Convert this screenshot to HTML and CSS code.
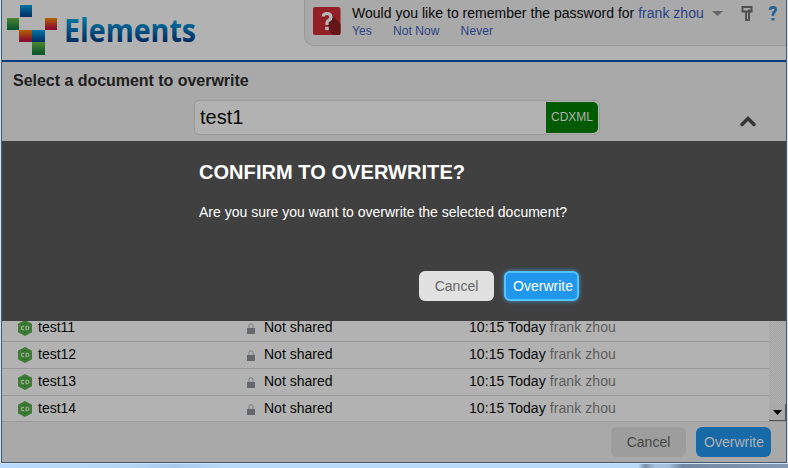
FILE: index.html
```
<!DOCTYPE html>
<html lang="en">
<head>
<meta charset="utf-8">
<title>Elements</title>
<link rel="stylesheet" href="styles.css">
</head>
<body>
<svg class="symbols" width="0" height="0" aria-hidden="true">
  <symbol id="cd" viewBox="0 0 14 16">
    <path d="M7 0l7 3.8v8.4L7 16l-7-3.8V3.8z" fill="#3e7c35"/>
    <path d="M3 5.2Q7 1.6 11 5.2M3 10.8q4 3.6 8 0" fill="none" stroke="#2c6b2c"/>
    <path d="M6 6.3H3.7v3.4H6M8 6.3h1.6q1.3 0 1.3 1.7T9.600 9.700H8z" fill="none" stroke="#a4b5a0"/>
  </symbol>
  <symbol id="lock" viewBox="0 0 8 11">
    <path d="M2 5V2.500Q2 .7 4 .7t2 1.800V5" fill="none" stroke="#777b7e"/>
    <path d="M0 5h8v6H0z" fill="#64686c"/>
  </symbol>
</svg>
<div class="window">
  <header class="header">
    <svg class="logo" width="200" height="60" viewBox="0 0 200 60">
      <defs>
        <linearGradient id="blue" x2="0" y2="1"><stop stop-color="#0074a4"/><stop offset="1" stop-color="#002c62"/></linearGradient>
        <linearGradient id="green" x2="0" y2="1"><stop stop-color="#4b8530"/><stop offset="1" stop-color="#07522e"/></linearGradient>
        <linearGradient id="red" x2="0" y2="1"><stop stop-color="#b26100"/><stop offset="1" stop-color="#850035"/></linearGradient>
        <linearGradient id="word" gradientUnits="userSpaceOnUse" x1="0" y1="17" x2="0" y2="43"><stop stop-color="#007ba8"/><stop offset="1" stop-color="#00285e"/></linearGradient>
      </defs>
      <path d="M18 5h12v12H18z" fill="url(#blue)"/>
      <path d="M30 30h13v12H30z" fill="url(#blue)"/>
      <path d="M5 18h12v12H5z" fill="url(#green)"/>
      <path d="M30 42h13v13H30z" fill="url(#green)"/>
      <path d="M43 18h12v12H43z" fill="url(#red)"/>
      <path d="M17 30h13v12H17z" fill="url(#red)"/>
      <text class="wordmark" x="62" y="42" textLength="132" lengthAdjust="spacingAndGlyphs" fill="url(#word)">Elements</text>
    </svg>
    <div class="prompt">
      <svg class="badge" width="29" height="29" viewBox="0 0 29 29">
        <rect width="27.500" height="28" rx="2" fill="#942027"/>
        <path d="M18 7l9.500 10v9q0 2-2 2H20l-6-6z" fill="#641519"/>
        <path d="M10.300 9.500Q10.300 6.500 14 6.500t4 3.500q0 2-2 3.200t-2 2.600V18" fill="none" stroke="#b8b8b8" stroke-width="3.200"/>
        <rect x="12.200" y="19.800" width="3.600" height="3.300" fill="#b8b8b8"/>
      </svg>
      <div class="question">
        <div class="ask">Would you like to remember the password for <a>frank zhou</a></div>
        <div class="answers"><a>Yes</a><a>Not Now</a><a>Never</a></div>
      </div>
      <svg class="tools" width="72" height="20" viewBox="0 0 72 20">
        <path d="M0 5h11L5.500 10z" fill="#666"/>
        <path d="M30.500 1h9v4.500h-9zM34 5.500v8.500h3V3.500" fill="none" stroke="#505050" stroke-width="2"/>
        <path d="M58 3.700Q58.500 1.300 61 1.300t2.700 2.300q0 1.500-1.500 2.500T61 9.800" fill="none" stroke="#286497" stroke-width="2.700"/>
        <path d="M59.500 12h3v2.500h-3z" fill="#286497"/>
      </svg>
    </div>
  </header>
  <main class="page">
    <h1>Select a document to overwrite</h1>
    <div class="name-row">
      <div class="field"><span class="value">test1</span><span class="type">CDXML</span></div>
      <svg class="chevron" width="16" height="11" viewBox="0 0 16 11"><path d="M2 8.500l6-6 6 6" fill="none" stroke="#353535" stroke-width="3.500" stroke-linecap="round"/></svg>
    </div>
  </main>
  <section class="dialog">
    <h2>CONFIRM TO OVERWRITE?</h2>
    <p>Are you sure you want to overwrite the selected document?</p>
    <div class="actions"><button class="btn light">Cancel</button><button class="btn focus">Overwrite</button></div>
  </section>
  <div class="documents">
    <div class="rows">
      <div class="row"><svg class="cd"><use href="#cd"/></svg><span class="doc">test11</span><svg class="lock"><use href="#lock"/></svg><span class="shared">Not shared</span><span class="when">10:15 Today <i>frank zhou</i></span></div>
      <div class="row"><svg class="cd"><use href="#cd"/></svg><span class="doc">test12</span><svg class="lock"><use href="#lock"/></svg><span class="shared">Not shared</span><span class="when">10:15 Today <i>frank zhou</i></span></div>
      <div class="row"><svg class="cd"><use href="#cd"/></svg><span class="doc">test13</span><svg class="lock"><use href="#lock"/></svg><span class="shared">Not shared</span><span class="when">10:15 Today <i>frank zhou</i></span></div>
      <div class="row"><svg class="cd"><use href="#cd"/></svg><span class="doc">test14</span><svg class="lock"><use href="#lock"/></svg><span class="shared">Not shared</span><span class="when">10:15 Today <i>frank zhou</i></span></div>
    </div>
    <div class="scrollbar"><div class="down"><svg width="9" height="5" viewBox="0 0 9 5"><path d="M0 0h9L4.500 5z"/></svg></div></div>
  </div>
  <footer class="footer"><button class="btn dim">Cancel</button><button class="btn primary">Overwrite</button></footer>
</div>
</body>
</html>
```
FILE: styles.css
```
* { box-sizing: border-box; }
body {
  margin: 0;
  height: 468px;
  overflow: hidden;
  font: 14px/18px "Liberation Sans", Arial, sans-serif;
  color: #080808;
  background: linear-gradient(90deg, #b9dafa 0, #b6d6f5 130px, #a7c9ea 175px, #b9dbfa 225px, #b9dbfa 638px, #7890ab 645px, #a4c0df 655px, #a4c0df 668px, #7188a3 682px, #8499b3 788px);
}
.symbols { position: absolute; }
.window {
  width: 786px;
  height: 463px;
  margin-left: 1px;
  border: solid #465a70;
  border-width: 0 1px 1px;
  background: #a9a9a9;
  box-shadow: 0 0 0 1px #d0e2f2;
}
.header {
  display: flex;
  justify-content: space-between;
  align-items: flex-start;
  height: 62px;
  background: #b2b2b2;
  border-bottom: 2px solid #063b7d;
}
.logo { overflow: visible; }
.wordmark { font: 700 32px "Open Sans", sans-serif; }
.prompt {
  display: flex;
  width: 482px;
  height: 46px;
  padding: 5px 0 0 8px;
  border: solid #999;
  border-width: 0 0 1px 1px;
  border-radius: 0 0 0 10px;
  background: #a9a9a9;
}
.badge { margin-top: 2px; }
.question { width: 360px; margin-left: 10px; white-space: nowrap; }
.ask { height: 18px; line-height: 17px; letter-spacing: 0.02px; }
a { color: #2a4384; }
.answers { display: flex; gap: 21px; font-size: 12px; line-height: 16px; letter-spacing: 0.1px; }
.tools { flex: none; margin: 1px 0 0; }
.page { height: 79px; }
h1 { margin: 0; padding: 10px 0 0 11px; font-size: 16px; line-height: 18px; letter-spacing: -0.03px; color: #202020; }
.name-row {
  display: flex;
  justify-content: space-between;
  align-items: center;
  margin: 10px 30px 0 192px;
}
.field {
  display: flex;
  align-items: center;
  justify-content: space-between;
  width: 406px;
  height: 35px;
  padding: 1px 1px 1px 5px;
  border: 1px solid #999;
  border-radius: 5px;
  background: #b2b2b2;
}
.value { padding-bottom: 2px; font-size: 20px; line-height: 24px; }
.type {
  width: 52px;
  height: 31px;
  border-radius: 0 5px 5px 0;
  background: #005a00;
  color: #b2b2b2;
  font-size: 12px;
  line-height: 30px;
  text-align: center;
}
.chevron { margin-top: 8px; }
.dialog {
  height: 180px;
  padding: 20px 207px 0 197px;
  background: #404040;
  color: #fff;
}
h2 { margin: 0; font-size: 20px; line-height: 22px; letter-spacing: 0.06px; white-space: nowrap; }
p { margin: 20px 0 0; white-space: nowrap; }
.actions { display: flex; justify-content: flex-end; gap: 10px; margin-top: 50px; }
.btn {
  width: 75px;
  height: 30px;
  padding: 0;
  border: 0;
  border-radius: 6px;
  font: 14px/28px "Liberation Sans", Arial, sans-serif;
}
.light { background: #e1e1e1; color: #666; }
.focus { padding-left: 3px; border: 2px solid #54c4ff; background: #2196ed; color: #fff; line-height: 26px; box-shadow: 0 0 4px #4a9bd0; }
.dim { background: #9d9d9d; color: #474747; }
.primary { padding-left: 1px; background: #1769a8; color: #b2b2b2; }
.documents { display: flex; height: 101px; background: #b2b2b2; border-bottom: 1px solid #999; }
.rows {
  display: flex;
  flex-direction: column;
  justify-content: flex-end;
  width: 767px;
  height: 102px;
  overflow: hidden;
}
.row {
  display: grid;
  flex: none;
  grid-template-columns: 21px 209px 17px 205px 1fr;
  align-items: center;
  height: 27px;
  padding: 0 0 2px 15px;
  border-bottom: 1px solid #999;
}
.row:last-child { border-color: transparent; }
.when { letter-spacing: 0.07px; }
.cd { width: 16px; height: 16px; margin-top: 2px; }
.lock { width: 8px; height: 11px; margin-top: 3px; }
i { font-style: normal; color: #5c5c5c; }
.scrollbar {
  display: flex;
  align-items: flex-end;
  width: 17px;
  background: repeating-conic-gradient(#a5a5a5 0 25%, #b0b0b0 0 50%) 0 0 / 2px 2px;
}
.down {
  display: flex;
  align-items: center;
  justify-content: center;
  width: 17px;
  height: 17px;
  background: #a9a9a9;
  border: solid #555;
  border-width: 0 1px 1px 0;
}
.footer { display: flex; justify-content: flex-end; gap: 10px; padding: 5px 15px 0 0; }
```
